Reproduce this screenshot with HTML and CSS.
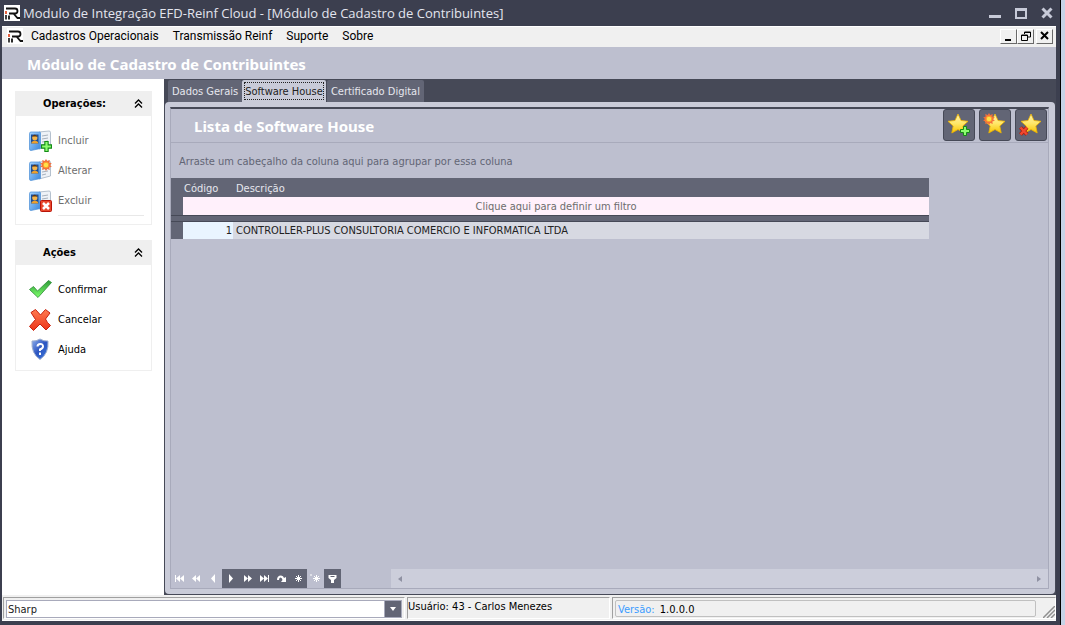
FILE: index.html
```html
<!DOCTYPE html>
<html lang="pt-BR">
<head>
    <meta charset="UTF-8">
    <meta name="viewport" content="width=device-width, initial-scale=1.0">
    <title>Modulo de Integração EFD-Reinf Cloud</title>
    <link rel="stylesheet" href="styles.css">
</head>
<body>
    <!-- Shared icon shapes -->
    <svg class="defs" width="0" height="0">
        <defs>
            <linearGradient id="blue" x1="0" y1="0" x2="1" y2="1">
                <stop offset="0" stop-color="#a4d4ff"/>
                <stop offset="1" stop-color="#3a86dc"/>
            </linearGradient>
            <linearGradient id="gold" x1="0" y1="0" x2="0" y2="1">
                <stop offset="0" stop-color="#fff3b0"/>
                <stop offset="0.5" stop-color="#ffe768"/>
                <stop offset="1" stop-color="#f8c400"/>
            </linearGradient>
            <linearGradient id="green" x1="0" y1="0" x2="0" y2="1">
                <stop offset="0" stop-color="#2f9a3a"/>
                <stop offset="1" stop-color="#7dff6a"/>
            </linearGradient>
            <linearGradient id="red" x1="0" y1="0" x2="0" y2="1">
                <stop offset="0" stop-color="#ff7a50"/>
                <stop offset="1" stop-color="#ec3418"/>
            </linearGradient>
            <linearGradient id="shield" x1="0" y1="0" x2="1" y2="1">
                <stop offset="0" stop-color="#8fb0ee"/>
                <stop offset="0.5" stop-color="#2c55c0"/>
                <stop offset="1" stop-color="#3c7be0"/>
            </linearGradient>
        </defs>
        <symbol id="logo" viewBox="0 0 16 16">
            <rect width="16" height="16" fill="#fff"/>
            <path d="M2 3.500h9q2.500 0 2.500 2.500t-2.500 2.500h-6M9.500 8.500l4 4.500h2.500M5 10.500v4" fill="none" stroke="#111" stroke-width="1.800"/>
            <path d="M2 10v4.500" stroke="#111" stroke-width="1.600"/>
            <path d="M2 6v3" stroke="#e03a10" stroke-width="1.600"/>
        </symbol>
        <symbol id="card" viewBox="0 0 24 24">
            <path d="M11 3l10-1q1.500 0 1.500 1.500V17L11 20z" fill="#eef2f7" stroke="#9aa9ba" stroke-width="0.700"/>
            <path d="M14 7l6-1M14 10l6-1M14 13l6-1M14 16l4-1" stroke="#a7b0bc"/>
            <path d="M1.500 4.500Q1.500 3 3 3h8.500q1 0 1 1v15.500L3 21.500q-1.500 0-1.500-1.500z" fill="url(#blue)" stroke="#4a8ed6" stroke-width="0.700"/>
            <rect x="3" y="5.500" width="7.500" height="9" fill="#1c4c94"/>
            <circle cx="6.800" cy="8.800" r="2.600" fill="#f4b64c"/>
            <path d="M4.300 8Q5 5.500 7 5.800 9 6 9.200 8L8 7.500H5.500z" fill="#5a3410"/>
            <path d="M3.500 14.500v-1.500q3.500-2.500 6.500 0v1.500z" fill="#eda02c"/>
        </symbol>
        <symbol id="plus" viewBox="0 0 10 10">
            <path d="M3.500 0.500h3v3h3v3h-3v3h-3v-3h-3v-3h3z" fill="#8dfc70" stroke="#138a16"/>
        </symbol>
        <symbol id="burst" viewBox="0 0 12 12">
            <path d="M6 0l1.300 2 2.500-1-.5 2.500 2.500.9-1.800 1.600 1.800 1.700-2.500.8.500 2.500-2.500-1L6 12l-1.300-2-2.500 1 .5-2.500L.2 7.700 2 6 .2 4.400l2.500-.9L2.200 1l2.500 1z" fill="#f4703c"/>
            <circle cx="6" cy="6" r="2.800" fill="#ffe14a" stroke="#fb9b2c"/>
        </symbol>
        <symbol id="star" viewBox="0 0 22 22">
            <path d="M11 1l3 6.500 7 .8-5.200 4.700 1.400 7-6.200-3.500L4.800 20l1.400-7L1 8.300l7-.8z" fill="url(#gold)" stroke="#efb400" stroke-width="0.800"/>
        </symbol>
        <symbol id="collapse" viewBox="0 0 9 9">
            <path d="M1 4.500l3.500-3.500L8 4.500M1 8.500L4.500 5 8 8.500" fill="none" stroke="#000" stroke-width="1.300"/>
        </symbol>
    </svg>

    <div class="window">
        <div class="titlebar">
            <svg class="logo"><use href="#logo"/></svg>
            <h1>Modulo de Integração EFD-Reinf Cloud - [Módulo de Cadastro de Contribuintes]</h1>
            <div class="window-controls">
                <button aria-label="Minimizar"><svg width="12" height="12"><path d="M0 9.500h12" stroke="#c7cad8" stroke-width="3"/></svg></button>
                <button aria-label="Maximizar"><svg width="12" height="12"><path d="M1 2v9h10V3H1" fill="none" stroke="#c7cad8" stroke-width="2"/><path d="M0 2.500h12" stroke="#c7cad8" stroke-width="3"/></svg></button>
                <button aria-label="Fechar"><svg width="12" height="12"><path d="M1.500 1.500l9 9M10.500 1.500l-9 9" stroke="#c7cad8" stroke-width="3"/></svg></button>
            </div>
        </div>

        <div class="client">
            <nav class="menubar">
                <svg class="logo"><use href="#logo"/></svg>
                <a href="#">Cadastros Operacionais</a>
                <a href="#">Transmissão Reinf</a>
                <a href="#">Suporte</a>
                <a href="#">Sobre</a>
                <div class="mdi-controls">
                    <button aria-label="Minimizar janela"><svg width="10" height="10"><path d="M1 9h6" stroke="#000" stroke-width="2"/></svg></button>
                    <button aria-label="Restaurar janela"><svg width="10" height="10"><path d="M3.500 3V1h6v5H7M3 1.500h7M.5 4v5.500h6V4zM0 4.500h7" fill="none" stroke="#000"/></svg></button>
                    <button aria-label="Fechar janela"><svg width="10" height="10"><path d="M1 1l7 7M8 1L1 8" stroke="#000" stroke-width="2"/></svg></button>
                </div>
            </nav>

            <h2 class="page-title">Módulo de Cadastro de Contribuintes</h2>

            <div class="main">
                <aside class="sidebar">
                    <section class="group">
                        <header><h3>Operações:</h3><svg width="9" height="9"><use href="#collapse"/></svg></header>
                        <div class="group-body with-rule">
                            <button disabled>
                                <svg viewBox="0 0 24 24"><use href="#card" width="24" height="24"/><use href="#plus" x="13" y="12" width="11" height="11"/></svg>
                                Incluir
                            </button>
                            <button disabled>
                                <svg viewBox="0 0 24 24"><use href="#card" width="24" height="24"/><use href="#burst" x="12" y="0" width="12" height="12"/></svg>
                                Alterar
                            </button>
                            <button disabled>
                                <svg viewBox="0 0 24 24"><use href="#card" width="24" height="24"/><rect x="12.500" y="11.500" width="11" height="11" rx="1" fill="#e8472c" stroke="#b81408"/><path d="M15 14l6 6M21 14l-6 6" stroke="#fff" stroke-width="2.500"/></svg>
                                Excluir
                            </button>
                        </div>
                    </section>
                    <section class="group">
                        <header><h3>Ações</h3><svg width="9" height="9"><use href="#collapse"/></svg></header>
                        <div class="group-body">
                            <button>
                                <svg viewBox="0 0 24 24"><path d="M1.500 11.500l4-3 4 4.500L20.500 2.500l3 2L10 19.500z" fill="url(#green)" stroke="#2c8a35" stroke-width="0.800"/></svg>
                                Confirmar
                            </button>
                            <button>
                                <svg viewBox="0 0 24 24"><path d="M3 4.500L7.500 1.500l5 5.500L17.500 1.500 22 5l-4.500 6q1.500 4 5 6.500L18 22l-6-6-6.500 6.500L1.500 18.500 7.500 11.500z" fill="url(#red)" stroke="#c8200c" stroke-linejoin="round"/></svg>
                                Cancelar
                            </button>
                            <button>
                                <svg viewBox="0 0 24 24"><path d="M12 1q4 2.500 8 2 1 12.500-8 18.500-9-6-8-18.500 4 .5 8-2z" fill="url(#shield)" stroke="#9eafcf"/><path d="M9.500 8.500q0-2.500 2.800-2.500T15 8.500q0 1.800-3 3v1.500M12 14.500v2.500" fill="none" stroke="#fff" stroke-width="2"/></svg>
                                Ajuda
                            </button>
                        </div>
                    </section>
                </aside>

                <div class="content">
                    <div class="tabs" role="tablist">
                        <button role="tab">Dados Gerais</button>
                        <button role="tab" class="active" aria-selected="true"><span>Software House</span></button>
                        <button role="tab">Certificado Digital</button>
                    </div>
                    <div class="tab-page">
                        <div class="panel">
                            <div class="panel-head">
                                <h2>Lista de Software House</h2>
                                <div class="tools">
                                    <button aria-label="Incluir software house"><svg viewBox="0 0 24 24"><use href="#star" width="22" height="22"/><use href="#plus" x="13" y="13" width="10" height="10"/></svg></button>
                                    <button aria-label="Alterar software house"><svg viewBox="0 0 24 24"><use href="#star" x="1" width="22" height="22"/><use href="#burst" x="0" y="0" width="12" height="12"/></svg></button>
                                    <button aria-label="Excluir software house"><svg viewBox="0 0 24 24"><use href="#star" x="1" width="22" height="22"/><path d="M1.500 14.500l6.500 7M8 14.500l-6.500 7" stroke="#a81c10" stroke-width="4"/><path d="M1.500 14.500l6.500 7M8 14.500l-6.500 7" stroke="#f04a30" stroke-width="2.500"/></svg></button>
                                </div>
                            </div>

                            <div class="group-by">Arraste um cabeçalho da coluna aqui para agrupar por essa coluna</div>

                            <table class="grid">
                                <thead>
                                    <tr>
                                        <th class="indicator"></th>
                                        <th class="code">Código</th>
                                        <th>Descrição</th>
                                    </tr>
                                </thead>
                                <tbody>
                                    <tr class="filter">
                                        <td class="indicator"></td>
                                        <td colspan="2">Clique aqui para definir um filtro</td>
                                    </tr>
                                    <tr class="separator"><td colspan="3"></td></tr>
                                    <tr class="record">
                                        <td class="indicator"></td>
                                        <td class="code">1</td>
                                        <td>CONTROLLER-PLUS CONSULTORIA COMERCIO E INFORMATICA LTDA</td>
                                    </tr>
                                </tbody>
                            </table>

                            <div class="grid-footer">
                                <div class="navigator">
                                    <button disabled aria-label="Primeiro"><svg viewBox="0 0 11 9"><path d="M1 1h1v7H1zM6 1v7L2 4.500zM10 1v7L6 4.500z"/></svg></button>
                                    <button disabled aria-label="Página anterior"><svg viewBox="0 0 11 9"><path d="M5 1v7L1 4.500zM9 1v7L5 4.500z"/></svg></button>
                                    <button disabled aria-label="Anterior"><svg viewBox="0 0 11 9"><path d="M7 0v9L3 4.500z"/></svg></button>
                                    <button aria-label="Próximo"><svg viewBox="0 0 11 9"><path d="M4 0v9l4-4.500z"/></svg></button>
                                    <button aria-label="Próxima página"><svg viewBox="0 0 11 9"><path d="M2 1v7l4-3.500zM6 1v7l4-3.500z"/></svg></button>
                                    <button aria-label="Último"><svg viewBox="0 0 11 9"><path d="M1 1v7l4-3.500zM5 1v7l4-3.500zM9 1h1v7H9z"/></svg></button>
                                    <button aria-label="Ir para"><svg viewBox="0 0 11 9"><path d="M1 6q0-4.500 4-4.500 2.500 0 3 2.500L10 3v5H5l1.500-2Q6 3.500 4.500 3.500 3 3.500 3 6z"/></svg></button>
                                    <button aria-label="Marcar"><svg viewBox="0 0 11 9"><path class="line" d="M5.500 1v7M2 4.500h7M3 2l5 5M8 2L3 7"/></svg></button>
                                    <button disabled aria-label="Voltar à marca"><svg viewBox="0 0 11 9"><path class="line" d="M6.500 1v7M3 4.500h7M4 2l5 5M9 2L4 7M1 0v2"/></svg></button>
                                    <button aria-label="Filtrar"><svg viewBox="0 0 11 9"><path fill-rule="evenodd" d="M1.500 1h8v3L7 6v3H4V6L1.500 4zM3.500 2v1h4V2z"/></svg></button>
                                </div>
                                <div class="scrollbar">
                                    <svg width="6" height="8"><path d="M5 1v6L1 4z"/></svg>
                                    <svg width="6" height="8"><path d="M1 1v6l4-3z"/></svg>
                                </div>
                            </div>
                        </div>
                    </div>
                </div>
            </div>

            <footer class="statusbar">
                <div class="pane pane-skin">
                    <select aria-label="Aparência">
                        <option>Sharp</option>
                    </select>
                    <span class="arrow"><svg width="6" height="4"><path d="M0 0h6L3 4z" fill="#fff"/></svg></span>
                </div>
                <div class="pane pane-user">Usuário: 43 - Carlos Menezes</div>
                <div class="pane pane-version">
                    <div class="version"><span>Versão:</span> 1.0.0.0</div>
                    <svg width="12" height="12"><path d="M0 12L12 0M4 12l8-8M8 12l4-4" stroke="#8f8f8f" stroke-width="1.500"/></svg>
                </div>
            </footer>
        </div>
    </div>
</body>
</html>
```

FILE: styles.css
```css
* {
    box-sizing: border-box;
}
body {
    margin: 0;
    height: 100vh;
    display: flex;
    background: #c6d3e6;
    font-family: "DejaVu Sans Condensed", Tahoma, sans-serif;
    font-size: 11px;
    line-height: 14px;
}
h1, h2, h3 {
    margin: 0;
}
button {
    font: inherit;
    padding: 0;
    border: none;
    background: none;
}
.defs {
    position: absolute;
}
.window {
    flex: 1;
    min-width: 0;
    display: flex;
    flex-direction: column;
    margin-right: 4px;
    padding: 0 4px 4px 2px;
    background: #3c3f4f;
    border-right: 1px solid #000;
}

/* Title bar */
.titlebar {
    display: flex;
    align-items: center;
    height: 26px;
    padding: 0 3px 0 2px;
    gap: 3px;
}
.logo {
    width: 16px;
    height: 16px;
    flex: none;
}
.titlebar h1 {
    flex: 1;
    font: 13px/18px "Open Sans", sans-serif;
    color: #e3e5ee;
    white-space: nowrap;
}
.window-controls {
    display: flex;
    gap: 14px;
}
.window-controls svg {
    display: block;
}
.client {
    flex: 1;
    min-height: 0;
    display: flex;
    flex-direction: column;
    background: #f0f0f0;
    border-top: 1px solid #fff;
}

/* Menu */
.menubar {
    display: flex;
    align-items: center;
    height: 20px;
    padding: 0 3px 2px 5px;
    gap: 14px;
    font: 12px/16px Roboto, sans-serif;
}
.menubar .logo {
    margin-right: -6px;
}
.menubar a {
    color: #000;
    text-decoration: none;
}
.mdi-controls {
    display: flex;
    margin-left: auto;
}
.mdi-controls button {
    width: 17px;
    height: 15px;
    display: flex;
    align-items: center;
    justify-content: center;
    background: #f0f0f0;
    border: 1px solid;
    border-color: #fff #696969 #696969 #fff;
}
.mdi-controls button:last-child {
    margin-left: 2px;
}
.page-title {
    height: 32px;
    padding-left: 25px;
    background: #bdbfcf;
    color: #fff;
    font: bold 15px/34px "Noto Sans", sans-serif;
}
.main {
    flex: 1;
    min-height: 0;
    display: flex;
}

/* Sidebar */
.sidebar {
    width: 162px;
    padding: 12px 12px 0 13px;
    background: #fff;
    display: flex;
    flex-direction: column;
    gap: 15px;
}
.group header {
    display: flex;
    justify-content: space-between;
    align-items: center;
    height: 25px;
    padding: 0 9px 0 28px;
    background: #efefef;
}
.group h3 {
    font-size: 11px;
}
.group-body {
    padding: 9px 7px 6px 12px;
    border: 1px solid #efefef;
    border-top: none;
}
.with-rule {
    padding-bottom: 8px;
}
.with-rule::after {
    content: "";
    display: block;
    margin-left: 30px;
    border-bottom: 1px solid #e8e8e8;
}
.group-body button {
    display: flex;
    align-items: center;
    gap: 6px;
    width: 100%;
    height: 30px;
    padding-top: 1px;
    color: #000;
}
.group-body button:disabled {
    color: #6d6d6d;
}
.group-body svg {
    width: 24px;
    height: 24px;
}

/* Tabs */
.content {
    flex: 1;
    min-width: 0;
    display: flex;
    flex-direction: column;
    padding: 0 1px 1px;
    background: #464957;
}
.tabs {
    display: flex;
    height: 23px;
    padding: 1px 3px 0;
}
.tabs button {
    padding: 2px 4px 0;
    background: #626575;
    color: #e6e7ee;
    border-radius: 2px 2px 0 0;
}
.tabs .active {
    margin: 0 1px 0 0;
    padding: 0 2px;
    background: #c9cbd8;
    color: #222;
}
.tabs .active span {
    display: block;
    padding: 2px 0 0;
    border: 1px dotted #222;
}
.tab-page {
    flex: 1;
    display: flex;
    padding: 5px 6px 5px 5px;
    background: #c9cbd8;
    border-radius: 4px;
}
.panel {
    flex: 1;
    min-width: 0;
    display: flex;
    flex-direction: column;
    background: #bdbfcf;
    border: 1px solid #a8aabb;
    border-top: 2px solid #464957;
}
.panel-head {
    display: flex;
    align-items: center;
    justify-content: space-between;
    height: 34px;
    padding-left: 23px;
    border-bottom: 1px solid #a8aabb;
}
.panel-head h2 {
    color: #fff;
    font: bold 15px/20px "Noto Sans", sans-serif;
}
.tools {
    display: flex;
    gap: 4px;
    padding: 0 1px 1px 0;
}
.tools button {
    display: flex;
    align-items: center;
    justify-content: center;
    width: 32px;
    height: 32px;
    background: #626575;
    border: 1px solid #464957;
    border-radius: 3px;
}
.tools svg {
    width: 24px;
    height: 24px;
}

/* Data grid */
.group-by {
    height: 35px;
    padding-left: 8px;
    line-height: 38px;
    color: #626575;
}
.grid {
    width: 758px;
    max-width: 100%;
    table-layout: fixed;
    border-collapse: collapse;
    background: #626575;
}
.grid th {
    height: 19px;
    padding: 2px 3px 0;
    text-align: left;
    font-weight: normal;
    color: #e6e7ee;
}
.grid td {
    height: 18px;
    padding: 2px 3px 0;
    white-space: nowrap;
}
.grid .indicator {
    width: 12px;
    padding: 0;
    background: #626575;
}
.grid th.code {
    width: 50px;
    padding: 2px 1px 0;
}
.filter td {
    background: #fff0fb;
    color: #6d6d6d;
    text-align: center;
}
.grid .separator td {
    height: 6px;
    padding: 0;
    border: solid #464957;
    border-width: 1px 0;
}
.record td {
    background: #d7d9e2;
    color: #222;
}
.grid .record .code {
    padding: 2px 1px 0;
    background: #e9f4ff;
    text-align: right;
}
.grid-footer {
    display: flex;
    justify-content: space-between;
    margin-top: auto;
}
.navigator {
    display: flex;
    width: 220px;
}
.navigator button {
    display: flex;
    align-items: center;
    justify-content: center;
    width: 17px;
    height: 19px;
    background: #626575;
}
.navigator button:disabled {
    background: none;
}
.navigator svg {
    width: 11px;
    height: 9px;
    fill: #fff;
}
.navigator .line {
    stroke: #fff;
}
.scrollbar {
    flex: 1;
    display: flex;
    align-items: center;
    justify-content: space-between;
    padding: 0 6px;
    background: #cccedb;
    fill: #8f91a2;
}

/* Status bar */
.statusbar {
    display: flex;
    gap: 2px;
    height: 26px;
    padding: 2px 0 1px 1px;
    border-bottom: 1px solid #fff;
}
.pane {
    display: flex;
    border: 1px solid;
    border-color: #a0a0a0 #fff #fff #a0a0a0;
}
.pane-skin {
    flex: 0 1 402px;
    padding: 2px 2px 0;
}
.pane-skin select {
    flex: 1;
    min-width: 0;
    padding: 2px 1px 0;
    appearance: none;
    font: inherit;
    color: #222;
    background: #fff;
    border: 1px solid #a8aabb;
    border-right: none;
    border-radius: 0;
}
.arrow {
    display: flex;
    align-items: center;
    justify-content: center;
    width: 18px;
    background: #626575;
    border: 1px solid #a8aabb;
}
.pane-user {
    flex: 0 1 203px;
    padding: 2px 0 0;
    white-space: nowrap;
}
.pane-version {
    flex: 1;
    align-items: flex-end;
    justify-content: space-between;
    gap: 7px;
    padding-left: 2px;
}
.version {
    flex: 1;
    align-self: center;
    height: 17px;
    padding: 2px 2px 0;
    border: 1px solid #c0c0c0;
    border-radius: 2px;
}
.version span {
    margin-right: 2px;
    color: #3c9cff;
}
```
